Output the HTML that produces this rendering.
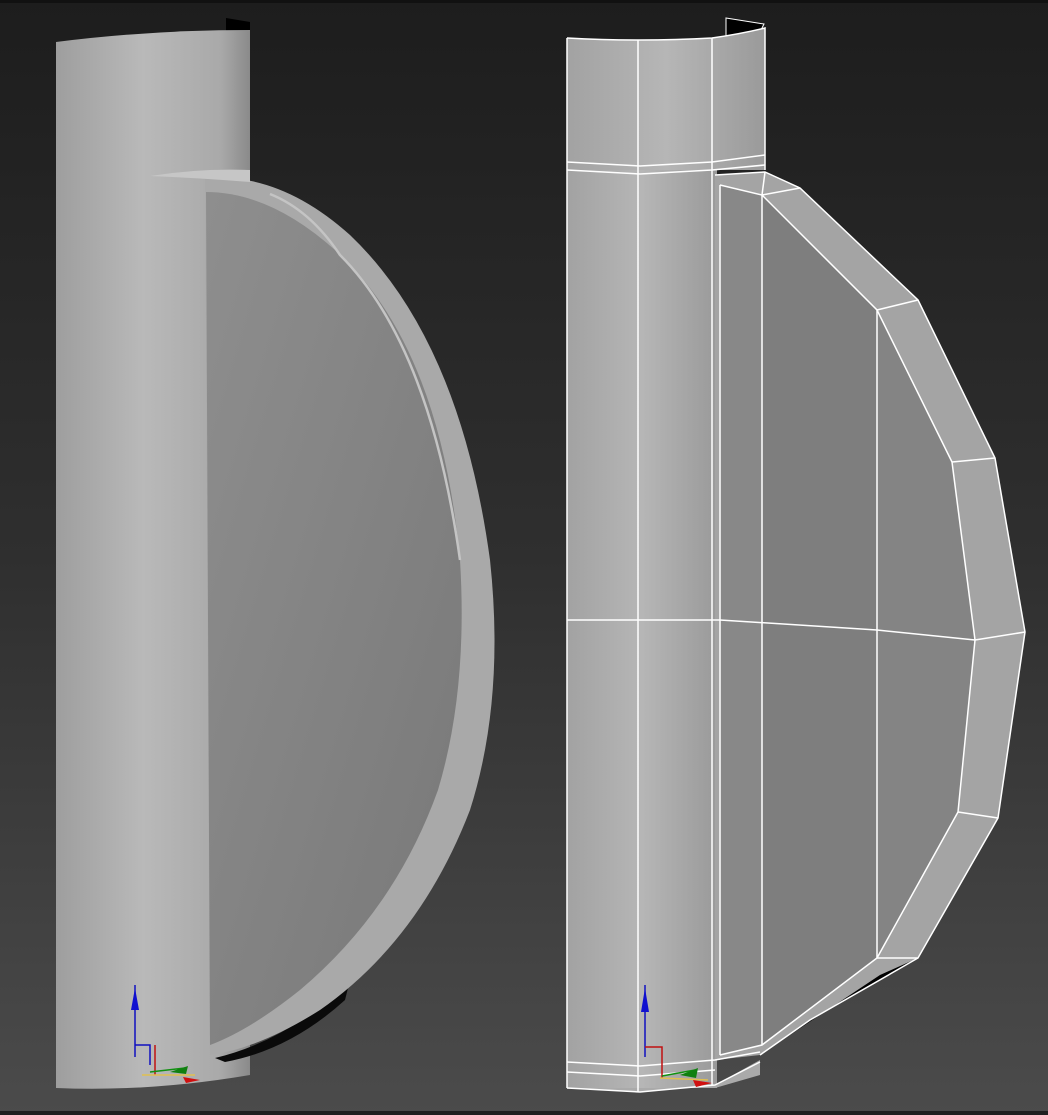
<!DOCTYPE html>
<html><head><meta charset="utf-8"><style>
html,body{margin:0;padding:0;background:#2a2a2a;}
svg{display:block}
</style></head><body>
<svg width="1048" height="1115" viewBox="0 0 1048 1115" xmlns="http://www.w3.org/2000/svg">
<defs>
<linearGradient id="bg" x1="0" y1="0" x2="0" y2="1">
<stop offset="0" stop-color="#1d1d1d"/><stop offset="0.5" stop-color="#2f2f2f"/><stop offset="1" stop-color="#4b4b4b"/>
</linearGradient>
<linearGradient id="tube" x1="0" y1="0" x2="1" y2="0">
<stop offset="0" stop-color="#9e9e9e"/><stop offset="0.45" stop-color="#b9b9b9"/><stop offset="0.85" stop-color="#a9a9a9"/><stop offset="1" stop-color="#8a8a8a"/>
</linearGradient>
<linearGradient id="face" x1="0" y1="0" x2="1" y2="1">
<stop offset="0" stop-color="#8e8e8e"/><stop offset="1" stop-color="#787878"/>
</linearGradient>
<linearGradient id="tube2" x1="0" y1="0" x2="1" y2="0">
<stop offset="0" stop-color="#a2a2a2"/><stop offset="0.5" stop-color="#b6b6b6"/><stop offset="1" stop-color="#9a9a9a"/>
</linearGradient>
</defs>
<rect width="1048" height="1115" fill="url(#bg)"/>
<rect y="0" width="1048" height="3" fill="#111"/>
<rect y="1111" width="1048" height="4" fill="#202020"/>

<!-- LEFT MODEL -->
<path d="M226 18 L250 22 L250 40 L226 40Z" fill="#000"/>
<path d="M56 42 Q150 30 250 30 L250 1075 Q150 1092 56 1088Z" fill="url(#tube)"/>
<!-- shadow crescent at bottom -->
<path d="M215 1058 Q290 1040 350 980 L345 1000 Q290 1050 225 1062Z" fill="#0a0a0a"/>
<!-- disc rim -->
<path d="M205 178 Q280 172 350 235 Q460 340 490 560 Q505 700 470 810 Q420 940 320 1010 Q260 1048 210 1055Z" fill="#a9a9a9"/>
<path d="M206 192 Q270 192 335 250 Q440 345 460 560 Q468 690 438 790 Q395 910 300 990 Q250 1030 210 1045Z" fill="url(#face)"/>
<path d="M270 194 Q310 210 340 255 Q430 345 460 560" stroke="#c4c4c4" stroke-width="2.5" fill="none"/>
<path d="M150 176 Q200 168 250 170 L250 182 Q200 178 150 176Z" fill="#c6c6c6"/>

<!-- RIGHT MODEL -->
<path d="M726 18 L764 24 L758 36 L726 38Z" fill="#000" stroke="#fff" stroke-width="1"/>
<path d="M567 38 Q640 42 712 38 Q740 34 765 28 L765 170 L567 170Z" fill="url(#tube2)"/>
<rect x="567" y="170" width="150" height="918" fill="url(#tube2)"/>
<path d="M567 1088 L640 1092 L715 1085 L760 1060 L760 1075 L715 1088 Z" fill="#aaa"/>
<polygon points="715,175 765,172 800,188 918,300 995,458 1025,632 998,818 918,958 810,1020 760,1055 715,1060" fill="#a4a4a4"/>
<polygon points="720,185 762,195 877,310 952,462 975,640 958,812 877,958 762,1045 720,1055" fill="#7e7e7e"/>
<polygon points="720,185 762,195 762,1045 720,1055" fill="#888"/>
<polygon points="877,310 952,462 975,640 958,812 877,958" fill="#848484"/>
<polygon points="810,1020 918,958 880,975 760,1055" fill="#000"/>
<g stroke="#fff" stroke-width="1.5" fill="none">
<path d="M567 38 Q640 42 712 38 Q740 34 765 28 L765 170"/>
<line x1="567" y1="38" x2="567" y2="1088"/>
<line x1="638" y1="40" x2="638" y2="1092"/>
<line x1="712" y1="38" x2="712" y2="1085"/>
<path d="M567 162 L640 166 L712 162 L765 155"/>
<path d="M567 170 L640 174 L712 170 L765 165"/>
<path d="M567 1062 L640 1066 L715 1060 L760 1052"/>
<path d="M567 1072 L640 1076 L715 1070"/>
<path d="M567 1088 L640 1092 L715 1085 L760 1062"/>
<polyline points="715,175 765,172 800,188 918,300 995,458 1025,632 998,818 918,958 810,1020 760,1055"/>
<polyline points="720,185 762,195 877,310 952,462 975,640 958,812 877,958 762,1045 720,1055"/>
<line x1="765" y1="172" x2="762" y2="195"/>
<line x1="800" y1="188" x2="762" y2="195"/>
<line x1="918" y1="300" x2="877" y2="310"/>
<line x1="995" y1="458" x2="952" y2="462"/>
<line x1="1025" y1="632" x2="975" y2="640"/>
<line x1="998" y1="818" x2="958" y2="812"/>
<line x1="918" y1="958" x2="877" y2="958"/>
<line x1="720" y1="185" x2="720" y2="1055"/>
<line x1="762" y1="195" x2="762" y2="1045"/>
<line x1="877" y1="310" x2="877" y2="958"/>
<path d="M567 620 L720 620 L877 630 L975 640"/>
</g>

<!-- gizmos -->
<g stroke-width="1.5" fill="none">
<line x1="135" y1="985" x2="135" y2="1057" stroke="#1010c0"/>
<path d="M135 1045 L150 1045 L150 1065" stroke="#1010c0"/>
<line x1="155" y1="1045" x2="155" y2="1075" stroke="#c01010"/>
<line x1="142" y1="1075" x2="195" y2="1075" stroke="#e0c050"/>
<line x1="150" y1="1072" x2="185" y2="1068" stroke="#109010"/>
<line x1="645" y1="985" x2="645" y2="1057" stroke="#1010c0"/>
<path d="M645 1047 L662 1047 L662 1078" stroke="#c01010"/>
<line x1="660" y1="1078" x2="708" y2="1080" stroke="#e0c050"/>
<line x1="662" y1="1076" x2="695" y2="1070" stroke="#109010"/>
</g>
<polygon points="135,988 131,1010 139,1010" fill="#1010d0"/>
<polygon points="645,988 641,1012 649,1012" fill="#1010d0"/>
<polygon points="170,1072 188,1066 186,1074" fill="#108010"/>
<polygon points="680,1075 698,1068 696,1078" fill="#108010"/>
<polygon points="183,1077 200,1080 186,1083" fill="#d01010"/>
<polygon points="693,1080 712,1083 696,1087" fill="#d01010"/>
</svg>
</body></html>
